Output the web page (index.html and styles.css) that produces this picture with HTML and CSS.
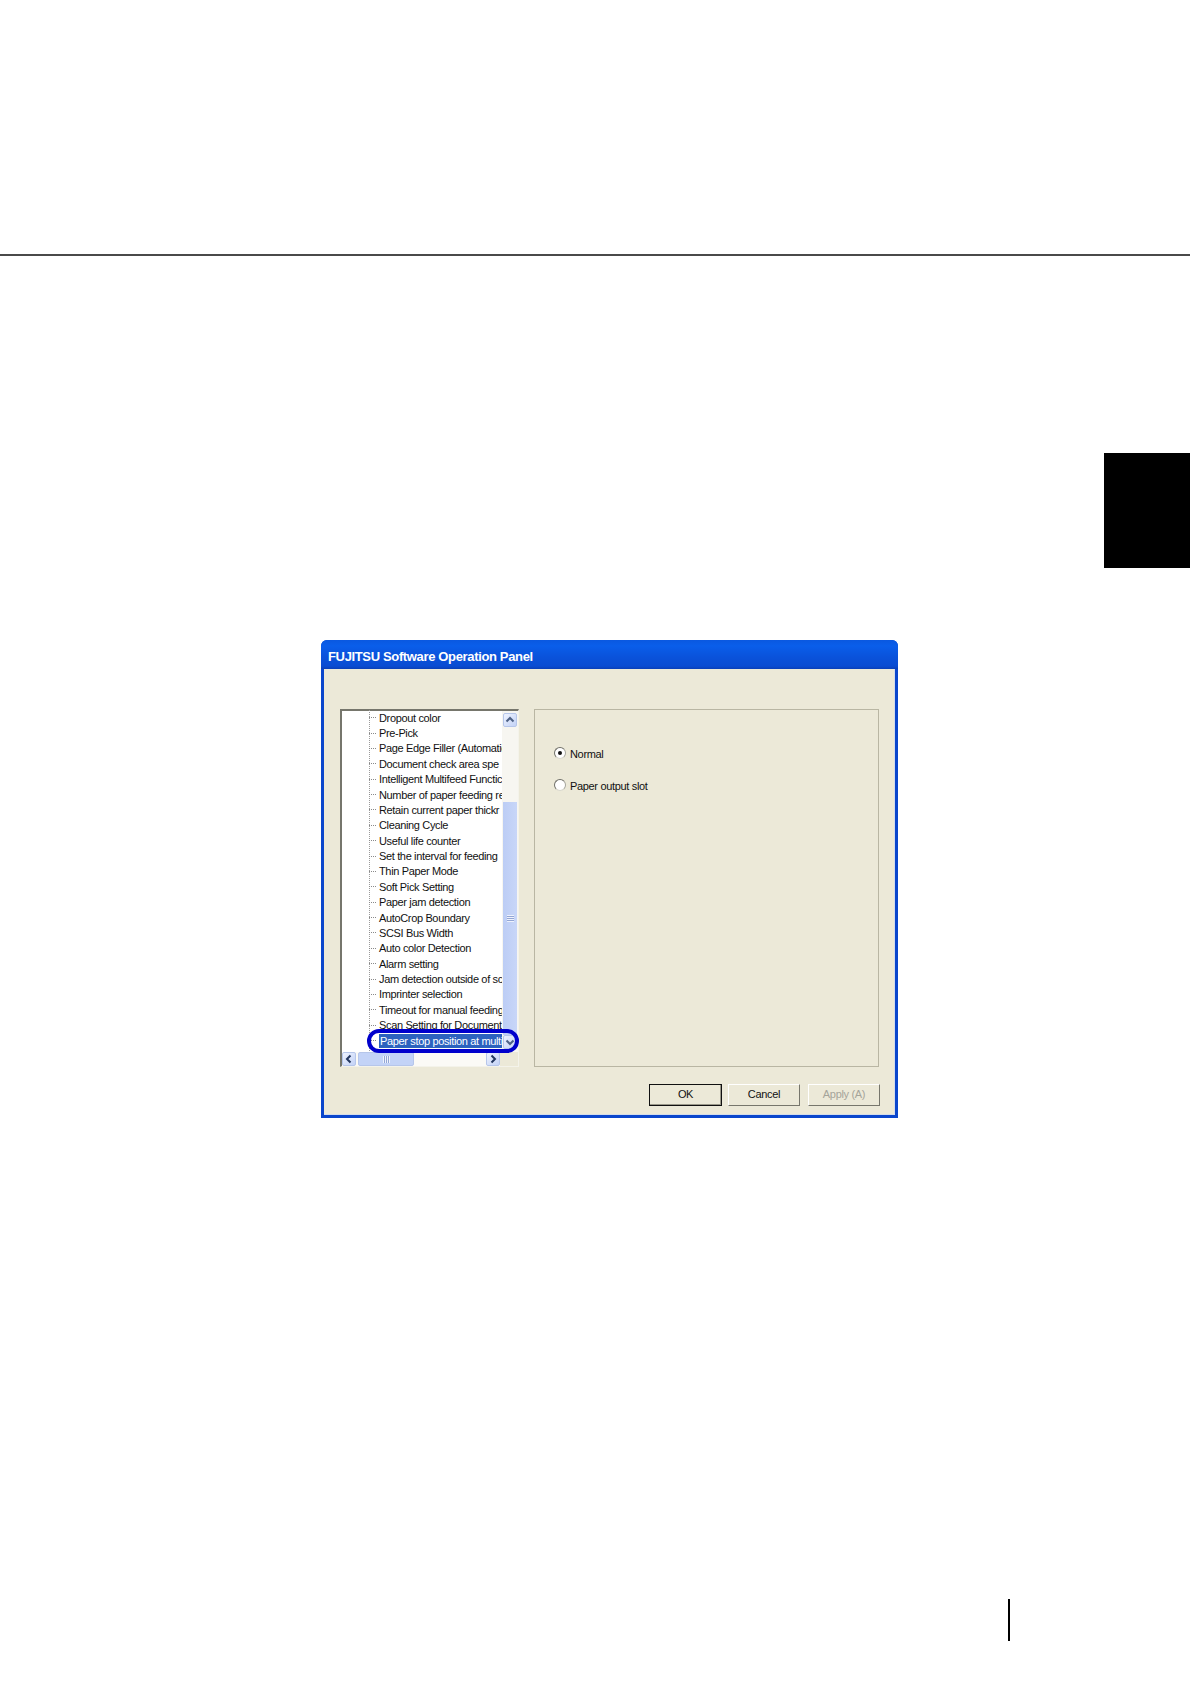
FILE: index.html
```html
<!DOCTYPE html>
<html lang="en">
<head>
    <meta charset="UTF-8">
    <title>FUJITSU Software Operation Panel</title>
    <link rel="stylesheet" href="styles.css">
</head>
<body>

    <div class="top-rule"></div>
    <div class="chapter-tab"></div>

    <!-- Dialog -->
    <div class="dialog">
        <div class="title-bar">FUJITSU Software Operation Panel</div>
        <div class="client">
            <div class="panes">
                <div class="tree-pane">
                    <div class="tree-body">
                        <ul class="tree">
                            <li>Dropout color</li>
                            <li>Pre-Pick</li>
                            <li>Page Edge Filler (Automatic</li>
                            <li>Document check area spe</li>
                            <li>Intelligent Multifeed Functic</li>
                            <li>Number of paper feeding re</li>
                            <li>Retain current paper thickr</li>
                            <li>Cleaning Cycle</li>
                            <li>Useful life counter</li>
                            <li>Set the interval for feeding</li>
                            <li>Thin Paper Mode</li>
                            <li>Soft Pick Setting</li>
                            <li>Paper jam detection</li>
                            <li>AutoCrop Boundary</li>
                            <li>SCSI Bus Width</li>
                            <li>Auto color Detection</li>
                            <li>Alarm setting</li>
                            <li>Jam detection outside of sc</li>
                            <li>Imprinter selection</li>
                            <li>Timeout for manual feeding</li>
                            <li>Scan Setting for Document</li>
                            <li class="selected"><span>Paper stop position at multi</span></li>
                        </ul>
                        <div class="vscroll">
                            <div class="scroll-btn">
                                <svg viewBox="0 0 14 14" width="14" height="14"><path d="M3.5 8.5 7 5l3.5 3.5" fill="none" stroke="#4d6185" stroke-width="2"/></svg>
                            </div>
                            <div class="vscroll-track"></div>
                            <div class="vscroll-thumb"><div class="grip-h"></div></div>
                            <div class="scroll-btn">
                                <svg viewBox="0 0 14 14" width="14" height="14"><path d="M3.5 5.5 7 9l3.5-3.5" fill="none" stroke="#4d6185" stroke-width="2"/></svg>
                            </div>
                        </div>
                    </div>
                    <div class="hscroll">
                        <div class="scroll-btn">
                            <svg viewBox="0 0 14 14" width="14" height="14"><path d="M8.5 3.5 5 7l3.5 3.5" fill="none" stroke="#22365f" stroke-width="2"/></svg>
                        </div>
                        <div class="hscroll-thumb"><div class="grip-v"></div></div>
                        <div class="hscroll-track"></div>
                        <div class="scroll-btn">
                            <svg viewBox="0 0 14 14" width="14" height="14"><path d="M5.5 3.5 9 7l-3.5 3.5" fill="none" stroke="#22365f" stroke-width="2"/></svg>
                        </div>
                        <div class="scroll-corner"></div>
                    </div>
                    <!-- callout ring drawn over the selected item -->
                    <div class="callout"></div>
                </div>
                <div class="options">
                    <label class="radio-row"><span class="radio checked"></span>Normal</label>
                    <label class="radio-row"><span class="radio"></span>Paper output slot</label>
                </div>
            </div>
            <div class="buttons">
                <div class="btn default">OK</div>
                <div class="btn">Cancel</div>
                <div class="btn disabled">Apply (A)</div>
            </div>
        </div>
    </div>

    <div class="page-mark"></div>

</body>
</html>
```

FILE: styles.css
```css
body {
    margin: 0;
    background-color: #ffffff;
    font-family: 'Liberation Sans', Arial, sans-serif;
    color: #111111;
}

.top-rule {
    height: 2px;
    margin-top: 254px;
    background-color: #4a4a4a;
}

.chapter-tab {
    width: 86px;
    height: 115px;
    margin: 197px 0 0 auto;
    background-color: #000000;
}

/* Dialog window */
.dialog {
    width: 577px;
    height: 478px;
    margin: 72px 0 0 321px;
    box-sizing: border-box;
    display: flex;
    flex-direction: column;
    background-color: #0a46cc;
    border-radius: 6px 6px 0 0;
    padding: 0 3px 3px;
}

.title-bar {
    height: 29px;
    flex-shrink: 0;
    margin: 0 -3px;
    padding: 7px 0 0 7px;
    box-sizing: border-box;
    border-radius: 6px 6px 0 0;
    background: linear-gradient(#0a58e0, #0a5eea 20%, #0a52da 60%, #0a4cd2 90%, #0a3fb8);
    color: #ffffff;
    font-weight: bold;
    font-size: 13px;
    letter-spacing: -0.35px;
    line-height: 20px;
}

.client {
    flex-grow: 1;
    display: flex;
    flex-direction: column;
    padding: 40px 16px 0;
    background-color: #ece9d8;
    box-shadow: inset -1px -1px 0 #d3dcea;
}

.panes {
    display: flex;
    height: 358px;
    gap: 15px;
}

/* Tree on the left */
.tree-pane {
    position: relative;
    width: 179px;
    box-sizing: border-box;
    display: flex;
    flex-direction: column;
    background-color: #ffffff;
    border: 1px solid #a9a89c;
    border-top: 2px solid #76766c;
    border-left: 2px solid #76766c;
    border-right-color: #f4f3ea;
    border-bottom-color: #f4f3ea;
}

.tree-body {
    flex-grow: 1;
    display: flex;
    min-height: 0;
}

.tree {
    list-style: none;
    flex-grow: 1;
    min-width: 0;
    margin: -1px 0 0;
    padding: 0 0 0 27px;
    overflow: hidden;
    background-image: linear-gradient(#9a9a9a 50%, transparent 50%);
    background-size: 1px 2px;
    background-position: 27px 0;
    background-repeat: repeat-y;
    font-size: 11px;
    letter-spacing: -0.35px;
}

.tree li {
    display: flex;
    align-items: center;
    height: 15.38px;
    white-space: nowrap;
}

.tree li::before {
    content: "";
    flex-shrink: 0;
    width: 7px;
    margin-right: 3px;
    border-top: 1px dotted #8a8a8a;
}

.tree li.selected span {
    display: block;
    flex-grow: 1;
    padding-left: 1px;
    line-height: 14px;
    background-color: #2c62bf;
    color: #ffffff;
}

/* Scrollbars */
.vscroll {
    width: 16px;
    box-sizing: border-box;
    padding: 0 1px;
    flex-shrink: 0;
    display: flex;
    flex-direction: column;
    background-color: #f7f6f1;
}

.scroll-btn {
    width: 14px;
    height: 14px;
    flex-shrink: 0;
    border: 1px solid #b6c6ea;
    border-radius: 2px;
    box-sizing: border-box;
    display: flex;
    align-items: center;
    justify-content: center;
    background: linear-gradient(135deg, #eef3ff, #c3d2f6);
}

.scroll-btn svg {
    flex-shrink: 0;
}

.vscroll .scroll-btn {
    margin: 2px 0 0;
}

.vscroll .scroll-btn:last-child {
    margin: 0 0 3px;
}

.vscroll-track {
    height: 75px;
}

.vscroll-thumb {
    flex-grow: 1;
    display: flex;
    align-items: center;
    justify-content: center;
    background: linear-gradient(90deg, #bccdf5, #c8d6f8);
}

.grip-h {
    width: 7px;
    height: 7px;
    background-image: linear-gradient(#eef2fd 50%, #93a6d4 50%);
    background-size: 100% 2px;
}

.hscroll {
    height: 14px;
    flex-shrink: 0;
    display: flex;
    background-color: #fbfaf6;
}

.hscroll-thumb {
    width: 56px;
    margin-left: 2px;
    box-sizing: border-box;
    display: flex;
    align-items: center;
    justify-content: center;
    border: 1px solid #b6c6ea;
    border-radius: 2px;
    background-color: #c3d3f7;
}

.grip-v {
    width: 7px;
    height: 7px;
    background-image: linear-gradient(90deg, #eef2fd 50%, #93a6d4 50%);
    background-size: 2px 100%;
}

.hscroll-track {
    flex-grow: 1;
}

.scroll-corner {
    width: 18px;
    background-color: #ece9d8;
}

.callout {
    position: absolute;
    left: 25px;
    bottom: 13px;
    width: 152px;
    height: 24px;
    box-sizing: border-box;
    border: 4px solid #0000cc;
    border-radius: 12px;
}

/* Options on the right */
.options {
    flex-grow: 1;
    box-sizing: border-box;
    padding-top: 36px;
    display: flex;
    flex-direction: column;
    gap: 17px;
    border: 1px solid #b9b6a3;
    font-size: 11px;
    letter-spacing: -0.33px;
}

.radio-row {
    display: flex;
    align-items: center;
    height: 15px;
    padding-left: 19px;
}

.radio {
    width: 10px;
    height: 10px;
    margin-right: 4px;
    border: 1px solid;
    border-color: #6f6f68 #a5a59c #d8d7cc #6f6f68;
    border-radius: 50%;
    display: flex;
    align-items: center;
    justify-content: center;
    background-color: #ffffff;
    position: relative;
    top: -1px;
}

.radio.checked::after {
    content: "";
    width: 4px;
    height: 4px;
    border-radius: 50%;
    background-color: #111111;
}

/* Bottom buttons */
.buttons {
    display: flex;
    justify-content: flex-end;
    gap: 6px;
    margin: 17px -1px 0 0;
}

.btn {
    width: 72px;
    height: 22px;
    box-sizing: border-box;
    text-align: center;
    font-size: 11px;
    letter-spacing: -0.33px;
    line-height: 18px;
    border: 1px solid #ffffff;
    border-right-color: #77766c;
    border-bottom-color: #77766c;
}

.btn.default {
    width: 73px;
    border: 1px solid #111111;
    box-shadow: inset -1px -1px 0 #9a988a;
}

.btn.disabled {
    margin-left: 2px;
    color: #a5a49a;
}

.page-mark {
    width: 2px;
    height: 42px;
    margin: 481px 0 0 1008px;
    background-color: #000000;
}
```
